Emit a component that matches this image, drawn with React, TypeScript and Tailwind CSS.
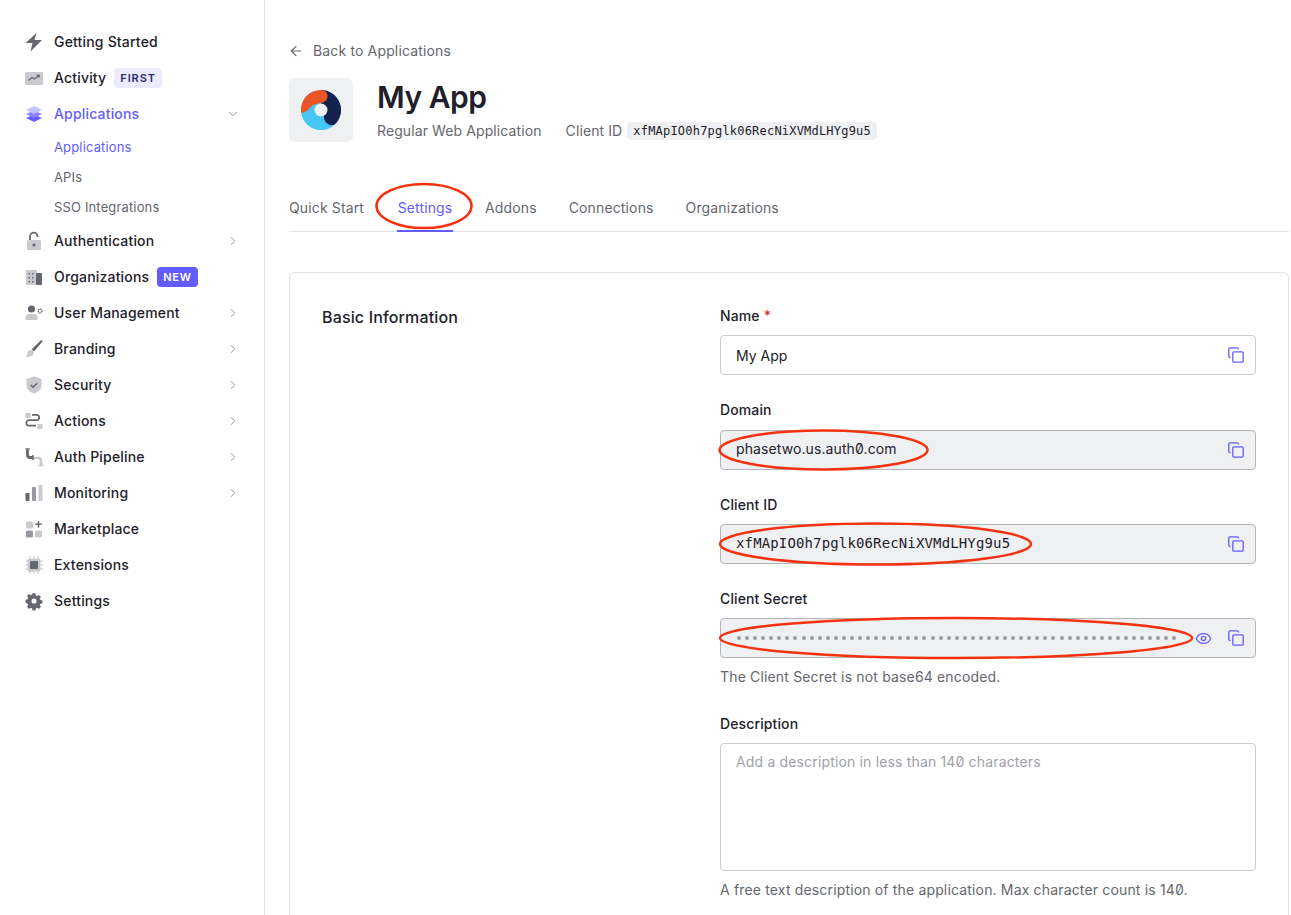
import { ArrowLeft, ChevronDown, ChevronRight, Eye } from "lucide-react"
import type { ReactNode } from "react"

const LIGHT = "#c9cace"
const DARK = "#65676e"

const icons: Record<string, ReactNode> = {
    bolt: <path d="M12.500 1 1.500 11h7l-2 8.500L18 8h-7.500L12.500 1Z" fill={DARK} />,
    activity: (
        <>
            <rect x="1" y="4" width="18" height="13" rx="1.500" fill={LIGHT} />
            <path d="m4.500 12.500 3.500-3 2.500 1.500 4.500-3.500m-2.500-.2 2.600-.1.1 2.400" fill="none" stroke={DARK} strokeWidth="1.300" />
        </>
    ),
    layers: (
        <>
            <path d="M10 10.500 2 14l8 4 8-4-8-3.500Z" fill="#635dff" />
            <path d="M10 6.500 2 10l8 4 8-4-8-3.500Z" fill="#8a85ff" />
            <path d="M10 2 2 6l8 4 8-4-8-4Z" fill="#c4c2ff" />
        </>
    ),
    lock: (
        <>
            <rect x="3" y="9" width="14" height="10" rx="1.500" fill={LIGHT} />
            <path d="M6 9V5.500a3.800 3.800 0 0 1 7.600 0V6" fill="none" stroke={DARK} strokeWidth="1.800" />
            <circle cx="10" cy="14" r="1.600" fill={DARK} />
        </>
    ),
    building: (
        <>
            <rect x="2" y="3" width="11" height="15" rx="1" fill={LIGHT} />
            <rect x="12" y="6" width="6" height="12" rx="1" fill={DARK} />
            <path d="M4.500 6h1.500v1.500H4.500zM8 6h1.500v1.500H8zM4.500 10h1.500v1.500H4.500zM8 10h1.500v1.500H8zM4.500 14h1.500v1.500H4.500zM8 14h1.500v1.500H8zM14.300 9h1.500v1.500h-1.500zM14.300 13h1.500v1.500h-1.500z" fill={DARK} />
        </>
    ),
    user: (
        <>
            <circle cx="7.500" cy="6" r="3.600" fill={DARK} />
            <path d="M1.500 16v-1.500c0-2.300 1.800-3.500 3.500-3.500h5c1.700 0 3.500 1.200 3.500 3.500V16c0 .6-.5 1-1 1h-10c-.5 0-1-.4-1-1Z" fill={LIGHT} />
            <circle cx="16" cy="8" r="1.900" fill="none" stroke={DARK} strokeWidth="1.300" strokeDasharray="1.400 .6" />
        </>
    ),
    brush: (
        <>
            <path d="M18 1.500c.5.4.5 1 .1 1.600L10 12.500l-2.300-2.200L16.600 1.600c.5-.4 1-.5 1.400-.1Z" fill={DARK} />
            <path d="M7 11c2 .3 3 1.500 2.700 3.300C9.300 17 5 18.500 1.500 18c1.700-1 1.500-2.600 2.200-4.500C4.200 12 5.500 10.800 7 11Z" fill={LIGHT} />
        </>
    ),
    shield: (
        <>
            <path d="M10 1.500 2.500 4v6.500c0 4 3.500 6.800 7.500 8 4-1.200 7.500-4 7.500-8V4L10 1.500Z" fill={LIGHT} />
            <path d="m6.800 10 2.300 2.200 4-4" fill="none" stroke={DARK} strokeWidth="1.600" />
        </>
    ),
    actions: (
        <>
            <rect x="1.500" y="2" width="5" height="5" fill={LIGHT} />
            <rect x="13.500" y="13" width="5" height="5" fill={LIGHT} />
            <path d="M8 3.800h4.500a2.700 2.700 0 0 1 0 5.400H5a2.700 2.700 0 0 0 0 5.400h7" fill="none" stroke={DARK} strokeWidth="1.700" />
        </>
    ),
    pipeline: (
        <>
            <path d="M3.500 3v5c0 1.500 1 2.500 2.500 2.500h3" fill="none" stroke={DARK} strokeWidth="2.800" />
            <path d="M1.500 2h4M9 8v5" stroke={DARK} strokeWidth="1.500" />
            <path d="M10 11h4c2 0 3 1 3 3v4" fill="none" stroke={LIGHT} strokeWidth="2.600" />
            <path d="M14.500 18.500h5" stroke={LIGHT} strokeWidth="1.500" />
        </>
    ),
    chart: (
        <>
            <rect x="1.500" y="10" width="4" height="8" rx="1" fill={DARK} />
            <rect x="8" y="4" width="4" height="14" rx="1" fill="#97999f" />
            <rect x="14.500" y="2" width="4" height="16" rx="1" fill={LIGHT} />
        </>
    ),
    market: (
        <>
            <rect x="2" y="2.500" width="7" height="7" rx="1.500" fill={LIGHT} />
            <rect x="2" y="11.500" width="7" height="7" rx="1.500" fill="#97999f" />
            <rect x="11" y="11.500" width="7" height="7" rx="1.500" fill={LIGHT} />
            <path d="M14.500 2v6.500M11.300 5.200h6.400" stroke={DARK} strokeWidth="1.500" />
        </>
    ),
    chip: (
        <>
            <path d="M6 1v18M10 1v18M14 1v18M1 6h18M1 10h18M1 14h18" stroke={LIGHT} strokeWidth="1.100" />
            <rect x="3.500" y="3.500" width="13" height="13" rx="1.500" fill={LIGHT} />
            <rect x="6" y="6" width="8" height="8" rx="1" fill={DARK} />
        </>
    ),
    gear: (
        <path
            transform="translate(1.500 1.500) scale(.85)"
            fillRule="evenodd"
            d="M8.300 1h3.400l.5 2.400 1.600.7 2.100-1.300 2.300 2.400-1.300 2 .7 1.700 2.400.5v3.300l-2.400.5-.7 1.700 1.300 2-2.300 2.400-2.100-1.300-1.600.7-.5 2.400H8.300l-.5-2.400-1.600-.7-2.100 1.300-2.300-2.400 1.300-2-.7-1.700L0 11.700V8.400l2.400-.5.7-1.700-1.300-2 2.300-2.400 2.100 1.300 1.600-.7L8.300 1ZM10 7a3 3 0 1 0 0 6 3 3 0 0 0 0-6Z"
            fill={DARK}
        />
    ),
}

type NavEntry = {
    label: string
    icon: string
    chevron?: boolean
    badge?: "first" | "new"
}

const topNav: NavEntry[] = [
    { label: "Getting Started", icon: "bolt" },
    { label: "Activity", icon: "activity", badge: "first" },
]

const bottomNav: NavEntry[] = [
    { label: "Authentication", icon: "lock", chevron: true },
    { label: "Organizations", icon: "building", badge: "new" },
    { label: "User Management", icon: "user", chevron: true },
    { label: "Branding", icon: "brush", chevron: true },
    { label: "Security", icon: "shield", chevron: true },
    { label: "Actions", icon: "actions", chevron: true },
    { label: "Auth Pipeline", icon: "pipeline", chevron: true },
    { label: "Monitoring", icon: "chart", chevron: true },
    { label: "Marketplace", icon: "market" },
    { label: "Extensions", icon: "chip" },
    { label: "Settings", icon: "gear" },
]

function NavIcon({ name }: { name: string }) {
    return (
        <svg viewBox="0 0 20 20" className="h-5 w-5 shrink-0">
            {icons[name]}
        </svg>
    )
}

function NavRow({ item }: { item: NavEntry }) {
    return (
        <div className="flex h-9 items-center">
            <NavIcon name={item.icon} />
            <span className="ml-2.5 text-sm font-medium tracking-[0.18px] text-[#1e212a]">{item.label}</span>
            {item.badge === "first" ? (
                <span className="ml-2 rounded bg-[#ebeaff] px-1.5 py-0.5 text-[11px] leading-4 font-semibold tracking-[0.08em] text-[#2d2a6b]">
                    FIRST
                </span>
            ) : null}
            {item.badge === "new" ? (
                <span className="ml-2 rounded bg-[#635dff] px-1.5 py-0.5 text-[11px] leading-4 font-semibold tracking-[0.06em] text-white">
                    NEW
                </span>
            ) : null}
            {item.chevron ? <ChevronRight className="ml-auto h-3.5 w-3.5 text-[#8a8c93]" strokeWidth={1.5} /> : null}
        </div>
    )
}

function Sidebar() {
    return (
        <aside className="w-[265px] shrink-0 border-r border-[#e3e4e6] pt-6 pr-6 pl-6">
            {topNav.map((item) => (
                <NavRow key={item.label} item={item} />
            ))}
            <div className="flex h-9 items-center">
                <NavIcon name="layers" />
                <span className="ml-2.5 text-sm font-medium tracking-[0.18px] text-[#635dff]">Applications</span>
                <ChevronDown className="ml-auto h-3.5 w-3.5 text-[#8a8c93]" strokeWidth={1.5} />
            </div>
            <div className="pt-px pl-[30px] text-[13px] tracking-[0.15px]">
                <div className="flex h-[30px] items-center text-[#635dff]">Applications</div>
                <div className="flex h-[30px] items-center text-[#65676e]">APIs</div>
                <div className="flex h-[30px] items-center text-[#65676e]">SSO Integrations</div>
            </div>
            {bottomNav.map((item) => (
                <NavRow key={item.label} item={item} />
            ))}
        </aside>
    )
}

function CopyIcon() {
    return (
        <svg viewBox="0 0 16 16" className="h-4 w-4 shrink-0" fill="none" stroke="#635dff" strokeWidth="1.300">
            <path d="M2.500 10.500H2A1.300 1.300 0 0 1 .8 9.200V2.100A1.300 1.300 0 0 1 2 .8h7.200a1.300 1.300 0 0 1 1.300 1.300v.4" />
            <rect x="4.800" y="4.800" width="10.400" height="10.400" rx="1.300" />
        </svg>
    )
}

function Field({
    label,
    required,
    disabled,
    gap = "mt-[25px]",
    inputGap = "mt-[9px]",
    children,
    hint,
    eye,
}: {
    label: string
    required?: boolean
    disabled?: boolean
    gap?: string
    inputGap?: string
    children: ReactNode
    hint?: string
    eye?: boolean
}) {
    return (
        <div className={gap}>
            <div className="h-[20px] text-sm leading-5 font-medium tracking-[0.12px] text-[#1e212a]">
                {label}
                {required ? <span className="ml-1 text-[#d03c38]">*</span> : null}
            </div>
            <div
                className={`${inputGap} flex h-10 items-center rounded border pr-[11px] pl-[15px] ${
                    disabled ? "border-[#b3b4b8] bg-[#eff0f2]" : "border-[#c9cace] bg-white"
                }`}
            >
                <div className="min-w-0 flex-1">{children}</div>
                {eye ? <Eye className="mr-[16px] h-[17px] w-[17px] text-[#635dff]" strokeWidth={1.8} /> : null}
                <CopyIcon />
            </div>
            {hint ? <p className="mt-[9px] text-sm leading-[20px] tracking-[0.16px] text-[#65676e]">{hint}</p> : null}
        </div>
    )
}

const monoFont = "font-['DejaVu_Sans_Mono','Liberation_Mono',monospace]"

export default function App() {
    return (
        <div className="relative flex h-[915px] overflow-hidden bg-white font-['Inter',sans-serif] slashed-zero">
            <Sidebar />

            <main className="flex min-w-0 flex-1 flex-col pt-[41px] pr-[2px] pl-6">
                <div className="flex h-5 items-center text-sm leading-5 tracking-[0.15px] text-[#65676e]">
                    <ArrowLeft className="mr-[9px] -ml-px h-4 w-4" strokeWidth={1.8} />
                    Back to Applications
                </div>

                <div className="mt-[17px] flex h-16">
                    <div className="flex h-16 w-16 shrink-0 items-center justify-center rounded-md bg-[#eff0f2]">
                        <svg viewBox="0 0 40 40" className="h-10 w-10">
                            <circle cx="20" cy="20" r="20" fill="#44c7f4" />
                            <path d="M20 0a20 20 0 0 1 14 34.300C29 37 23 33 23 27L20 14Z" fill="#16214d" />
                            <path d="M0 20A20 20 0 0 1 20 0c5 0 8 4 6 9-2 4-6 4-11 5-4 1-6 3-7 5-3 3-7 4-7.700 4L0 20Z" fill="#eb5424" />
                            <circle cx="20" cy="20" r="6.500" fill="#eff0f2" />
                        </svg>
                    </div>
                    <div className="ml-6">
                        <h1 className="mt-px text-[30px] leading-9 font-semibold tracking-[-0.5px] text-[#1e212a]">My App</h1>
                        <div className="mt-[6px] flex items-center text-sm tracking-[0.1px] text-[#65676e]">
                            <span>Regular Web Application</span>
                            <span className="ml-6">Client ID</span>
                            <code className={`ml-[5px] rounded bg-[#eff0f2] px-[6px] py-px text-xs leading-4 tracking-[0.2px] text-[#1e212a] ${monoFont}`}>
                                xfMApIO0h7pglk06RecNiXVMdLHYg9u5
                            </code>
                        </div>
                    </div>
                </div>

                <nav className="mt-[47px] flex h-[43px] shrink-0 gap-8 border-b border-[#e3e4e6] text-sm tracking-[0.14px] text-[#65676e]">
                    <span className="w-[76px] pt-[9px]">Quick Start</span>
                    <span className="h-[43px] w-14 border-b-2 border-[#635dff] pt-[9px] text-center text-[#635dff]">Settings</span>
                    <span className="pt-[9px]">Addons</span>
                    <span className="pt-[9px]">Connections</span>
                    <span className="pt-[9px]">Organizations</span>
                </nav>

                <section className="mt-10 flex flex-1 rounded-t-md border border-b-0 border-[#e3e4e6] pt-[33px] pr-8 pl-8">
                    <h2 className="-mt-px w-[398px] shrink-0 text-base leading-6 font-medium tracking-[0.15px] text-[#1e212a]">
                        Basic Information
                    </h2>
                    <div className="min-w-0 flex-1">
                        <Field label="Name" required gap="mt-0">
                            <span className="text-sm text-[#1e212a]">My App</span>
                        </Field>
                        <Field label="Domain" disabled inputGap="mt-[10px]">
                            <span className="block pb-[2px] text-sm tracking-[0.1px] text-[#1e212a]">phasetwo.us.auth0.com</span>
                        </Field>
                        <Field label="Client ID" disabled>
                            <span className={`block pb-[2px] text-sm tracking-[0.14px] text-[#1e212a] ${monoFont}`}>
                                xfMApIO0h7pglk06RecNiXVMdLHYg9u5
                            </span>
                        </Field>
                        <Field label="Client Secret" disabled eye hint="The Client Secret is not base64 encoded.">
                            <div className="flex gap-[4.07px] pl-[1px]">
                                {Array.from({ length: 55 }, (_, i) => (
                                    <span key={i} className="h-1 w-1 shrink-0 rounded-full bg-[#9a9ba1]" />
                                ))}
                            </div>
                        </Field>

                        <div className="mt-[27px] h-[20px] text-sm leading-5 font-medium tracking-[0.12px] text-[#1e212a]">
                            Description
                        </div>
                        <div className="mt-[9px] h-32 rounded border border-[#c9cace] px-[15px] py-[8px] text-sm leading-5 tracking-[0.16px] text-[#a0a1a7]">
                            Add a description in less than 140 characters
                        </div>
                        <p className="mt-[9px] text-sm leading-[20px] tracking-[0.16px] text-[#65676e]">
                            A free text description of the application. Max character count is 140.
                        </p>
                    </div>
                </section>
            </main>

            {/* hand-drawn annotation rings over the screenshot */}
            <svg className="pointer-events-none absolute inset-0 h-[915px] w-[1291px]" fill="none" stroke="#f5310f" strokeWidth="2.500">
                <ellipse cx="424" cy="206" rx="47.500" ry="22" />
                <ellipse cx="823.500" cy="450" rx="104" ry="19.500" />
                <ellipse cx="875.500" cy="544" rx="155.500" ry="20.500" />
                <ellipse cx="956" cy="638" rx="236" ry="20" />
            </svg>
        </div>
    )
}
